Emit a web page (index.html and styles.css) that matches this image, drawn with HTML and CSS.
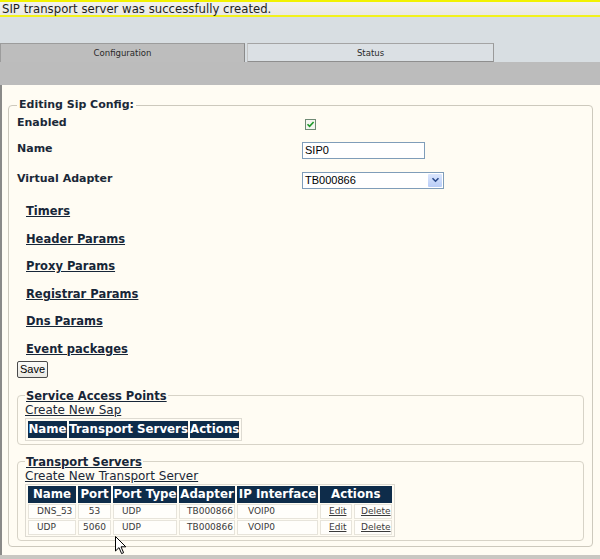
FILE: index.html
```html
<!DOCTYPE html>
<html>
<head>
<meta charset="utf-8">
<link rel="stylesheet" href="styles.css">
</head>
<body>
<div class="msg">SIP transport server was successfully created.</div>
<div class="top">
  <div class="tabs">
    <div class="tab tab-active">Configuration</div>
    <div class="tab tab-idle">Status</div>
  </div>
</div>
<div class="strip"></div>
<div class="content">
  <fieldset class="main">
    <legend>Editing Sip Config:</legend>
    <div class="row row-enabled">
      <span class="label">Enabled</span>
      <span class="ctl"><span class="check"><svg width="9" height="9" viewBox="0 0 9 9"><path d="M1.5 4.2 L3.6 6.4 L7.6 2" fill="none" stroke="#1f9a2a" stroke-width="1.6"/></svg></span></span>
    </div>
    <div class="row">
      <span class="label">Name</span>
      <span class="ctl"><span class="input">SIP0</span></span>
    </div>
    <div class="row">
      <span class="label">Virtual Adapter</span>
      <span class="ctl"><span class="select"><span class="sel-text">TB000866</span><span class="sel-btn"><svg width="9" height="6" viewBox="0 0 9 6"><path d="M1.5 1.2 L4.5 4.2 L7.5 1.2" fill="none" stroke="#2a4a8a" stroke-width="1.6"/></svg></span></span></span>
    </div>
    <div class="links">
      <a class="plink">Timers</a>
      <a class="plink">Header Params</a>
      <a class="plink">Proxy Params</a>
      <a class="plink">Registrar Params</a>
      <a class="plink">Dns Params</a>
      <a class="plink">Event packages</a>
    </div>
    <div class="save-row"><span class="btn">Save</span></div>
    <fieldset class="sub sub-sap">
      <legend><a class="leglink">Service Access Points</a></legend>
      <a class="create">Create New Sap</a>
      <table class="grid">
        <tr><th class="w39">Name</th><th class="w119">Transport Servers</th><th class="w48">Actions</th></tr>
      </table>
    </fieldset>
    <fieldset class="sub sub-ts">
      <legend><a class="leglink">Transport Servers</a></legend>
      <a class="create">Create New Transport Server</a>
      <table class="grid ts">
        <tr><th class="w48">Name</th><th class="w33">Port</th><th class="w64">Port Type</th><th class="w56">Adapter</th><th class="w81">IP Interface</th><th class="w71" colspan="2">Actions</th></tr>
        <tr><td>DNS_53</td><td class="port">53</td><td>UDP</td><td class="adp">TB000866</td><td class="ip">VOIP0</td><td class="act act-edit"><a>Edit</a></td><td class="act act-del"><a>Delete</a></td></tr>
        <tr><td>UDP</td><td class="port">5060</td><td>UDP</td><td class="adp">TB000866</td><td class="ip">VOIP0</td><td class="act act-edit"><a>Edit</a></td><td class="act act-del"><a>Delete</a></td></tr>
      </table>
    </fieldset>
  </fieldset>
  <svg class="cursor" width="12" height="19" viewBox="0 0 12 19"><path d="M0.5 0.5 L0.5 15 L4 11.6 L6.6 17.6 L8.6 16.7 L6 10.8 L10.8 10.8 Z" fill="#fff" stroke="#000" stroke-width="1"/></svg>
</div>
<div class="bottom"></div>
</body>
</html>
```
FILE: styles.css
```css
html, body {
  margin: 0;
  padding: 0;
  background: #d9dfe3;
  width: 600px;
  height: 559px;
  overflow: hidden;
}
body {
  font-family: "DejaVu Sans", Verdana, sans-serif;
  color: #1b2838;
}
.msg {
  height: 13px;
  border-top: 2px solid #f2f200;
  border-bottom: 2px solid #f2f21c;
  background: linear-gradient(#f2f1ee, #e9e8e4);
  font-family: "DejaVu Sans Condensed", "DejaVu Sans", sans-serif;
  font-stretch: condensed;
  font-size: 13px;
  line-height: 13px;
  padding-left: 2px;
  color: #1e1e1e;
  white-space: nowrap;
}
.top {
  height: 45px;
  background: #d8dee2;
  display: flex;
  align-items: flex-end;
}
.tabs {
  display: flex;
  gap: 2px;
}
.tab {
  font-family: "DejaVu Sans Condensed", "DejaVu Sans", sans-serif;
  font-stretch: condensed;
  font-size: 9.5px;
  line-height: 18px;
  text-align: center;
  color: #2a2a2a;
  box-sizing: border-box;
  height: 19px;
}
.tab-active {
  width: 245px;
  background: #bdbdbd;
  border-top: 1px solid #9c9c9c;
  border-left: 1px solid #9c9c9c;
  border-right: 1px solid #8a8a8a;
}
.tab-idle {
  width: 247px;
  background: #dbe0e4;
  border-top: 1px solid #a4a4a4;
  border-right: 1px solid #9a9a9a;
  border-left: 1px solid #c4c4c4;
  border-bottom: 1px solid #8e8e8e;
  line-height: 17px;
}
.strip {
  height: 23px;
  background: #bcbcbc;
}
.content {
  position: relative;
  height: 470px;
  background: #fffcf3;
  border-left: 2px solid #8a8a88;
  box-sizing: border-box;
  padding: 13px 7px 0 6px;
}
.bottom {
  height: 4px;
  background: #c9c7c2;
}
fieldset {
  margin: 0;
  min-width: 0;
}
.main {
  border: 1px solid #cdc9bd;
  border-radius: 4px;
  padding: 0 8px 0 8px;
  height: 449px;
  box-sizing: border-box;
}
.main > legend {
  font-weight: bold;
  font-size: 11px;
  padding: 0 2px;
  line-height: 14px;
  color: #1b2838;
}
.row {
  display: flex;
  align-items: center;
  height: 30px;
}
.row-enabled {
  height: 22px;
  margin-top: -1px;
}
.label {
  width: 285px;
  font-weight: bold;
  font-size: 11px;
}
.ctl {
  display: flex;
  align-items: center;
  padding-top: 4px;
}
.check {
  margin-left: 3px;
  width: 11px;
  height: 11px;
  box-sizing: border-box;
  border: 1px solid #6f8a74;
  background: #f4f6f0;
  display: flex;
  align-items: center;
  justify-content: center;
}
.input {
  width: 123px;
  height: 17px;
  box-sizing: border-box;
  border: 1px solid #7f9db9;
  background: #fff;
  font-family: "Liberation Sans", Arial, sans-serif;
  font-size: 11px;
  line-height: 15px;
  padding-left: 2px;
  color: #000;
}
.select {
  width: 142px;
  height: 17px;
  box-sizing: border-box;
  border: 1px solid #7f9db9;
  background: #fff;
  display: flex;
  align-items: stretch;
  justify-content: space-between;
  font-family: "Liberation Sans", Arial, sans-serif;
  font-size: 11px;
  color: #000;
}
.sel-text {
  padding-left: 2px;
  line-height: 15px;
}
.sel-btn {
  width: 14px;
  margin: 1px;
  background: linear-gradient(#dbe6fd, #b9cdf7);
  border-radius: 1px;
  display: flex;
  align-items: center;
  justify-content: center;
}
.links {
  display: flex;
  flex-direction: column;
  padding-left: 9px;
  margin-top: 5px;
}
.plink {
  height: 27.6px;
  line-height: 27.6px;
  font-weight: bold;
  font-size: 11.5px;
  text-decoration: underline;
  color: #172638;
  align-self: flex-start;
}
.save-row {
  display: flex;
  height: 19px;
  margin-top: -3px;
  align-items: flex-start;
}
.btn {
  width: 31px;
  height: 17px;
  box-sizing: border-box;
  border: 1px solid #4a4a4a;
  border-radius: 2px;
  background: linear-gradient(#fbfbf8, #e9e8e2);
  font-family: "Liberation Sans", Arial, sans-serif;
  font-size: 11px;
  line-height: 15px;
  text-align: center;
  color: #000;
}
.sub {
  border: 1px solid #d7d3c7;
  border-radius: 4px;
  padding: 0 7px 0 7px;
  box-sizing: border-box;
}
.sub-sap {
  height: 57px;
  margin-top: 8px;
}
.sub-ts {
  height: 87px;
  margin-top: 9px;
}
.sub > legend {
  padding: 0 1px;
  line-height: 13px;
}
.leglink {
  font-weight: bold;
  font-size: 11.5px;
  text-decoration: underline;
  color: #172638;
}
.create {
  display: block;
  font-size: 12px;
  line-height: 14px;
  text-decoration: underline;
  color: #1b2838;
  margin-top: 0;
}
.grid {
  border-collapse: separate;
  border-spacing: 2px;
  border: 1px solid #dedbd2;
  margin-top: 1px;
  margin-left: 0;
}
.grid.ts {
  border-spacing: 2px 1px;
}
.grid th {
  background: #0e2c4a;
  color: #fff;
  font-weight: bold;
  font-size: 11.8px;
  line-height: 15px;
  padding: 1px 0;
  white-space: nowrap;
  box-sizing: border-box;
}
.w33 { width: 33px; }
.w39 { width: 39px; }
.w48 { width: 48px; }
.w56 { width: 56px; }
.w64 { width: 64px; }
.w71 { width: 71px; }
.w81 { width: 81px; }
.w119 { width: 119px; }
.grid td {
  font-size: 9px;
  line-height: 13px;
  color: #3a3a3a;
  padding: 0 0 0 8px;
  border: 1px solid #e7e4db;
  background: #fffefb;
  white-space: nowrap;
}
.grid td.port {
  padding-left: 0;
  text-align: center;
}
.grid td.adp {
  padding-left: 7px;
}
.grid td.ip {
  padding-left: 10px;
}
.grid td.act-edit {
  width: 22px;
}
.grid td.act-del {
  padding-left: 6px;
}
.grid td.act a {
  text-decoration: underline;
  color: #3a3a3a;
}
.cursor {
  position: absolute;
  left: 113px;
  top: 451px;
}
```
